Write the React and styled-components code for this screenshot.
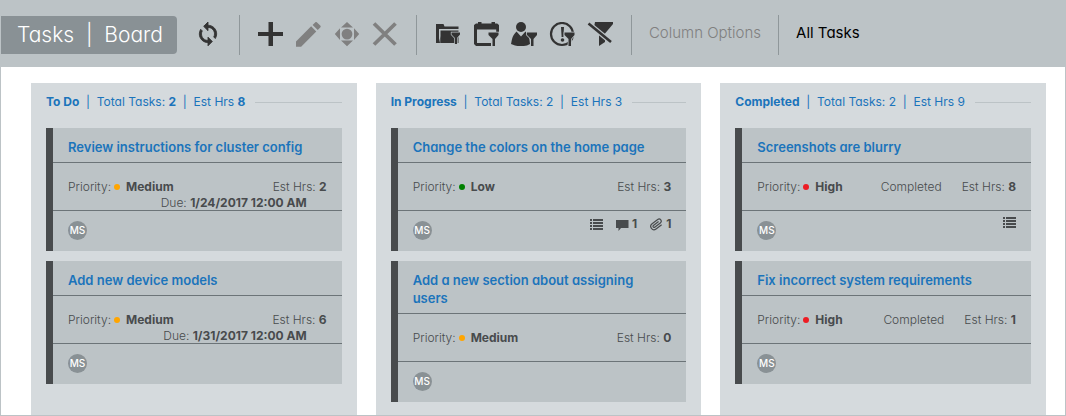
import React from "react";
import styled, { createGlobalStyle } from "styled-components";

const color = {
  bar: "#bcc3c6",
  badge: "#899195",
  rule: "#8f979a",
  column: "#d5dadd",
  cardRule: "#6c7478",
  dark: "#484b4d",
  icon: "#333333",
  muted: "#808080",
  link: "#1b74bb",
};

const GlobalStyle = createGlobalStyle`
  *, *::before, *::after { box-sizing: border-box; }
  body {
    margin: 0;
    background: #fff;
    color: ${color.dark};
    font-family: "Century Gothic", Inter, "Liberation Sans", sans-serif;
    font-feature-settings: "cv11";
    font-size: 12px;
    line-height: 16px;
  }
  button { font: inherit; font-feature-settings: inherit; }
`;

const Page = styled.div`
  display: flex;
  flex-direction: column;
  min-height: 100vh;
  border: 1px solid ${color.bar};
  border-top: 0;
`;

const Toolbar = styled.header`
  display: flex;
  align-items: center;
  padding: 15px 0 12px;
  background: ${color.bar};
`;

const PageTitle = styled.h1`
  margin: 0;
  padding: 0 14px 0 16px;
  border-radius: 0 4px 4px 0;
  background: ${color.badge};
  color: #fff;
  font-size: 21px;
  font-weight: 300;
  line-height: 38px;
  white-space: pre;
`;

const Divider = styled.span`
  width: 1px;
  height: 40px;
  background: ${color.rule};
`;

const Group = styled.div`
  display: flex;
  gap: 12px;
  margin: 0 18px;
`;

const IconButton = styled.button`
  width: 26px;
  height: 26px;
  padding: 0;
  border: 0;
  background: none;
  color: ${(p) => (p.disabled ? color.muted : color.icon)};
  svg { display: block; }
`;

const TextButton = styled.button`
  padding: 0 17px 4px;
  border: 0;
  background: none;
  color: ${(p) => (p.disabled ? color.muted : "#000")};
  font-size: 15px;
  font-weight: ${(p) => (p.disabled ? 300 : 400)};
  line-height: 20px;
  white-space: nowrap;
`;

const Board = styled.main`
  display: grid;
  grid-template-columns: repeat(3, minmax(0, 1fr));
  flex: 1;
  gap: 19px;
  padding: 16px 19px 0 30px;
`;

const Column = styled.section`
  padding: 10px 15px 13px;
  background: ${color.column};
`;

const ColumnHeader = styled.div`
  display: flex;
  align-items: center;
  gap: 10px;
  margin-bottom: 17px;
  color: ${color.link};
  line-height: 18px;
  white-space: pre;
  &::after {
    content: "";
    flex: 1;
    height: 1px;
    background: ${color.bar};
  }
`;

const ColumnName = styled.h2`
  display: inline;
  margin: 0;
  font-size: 12px;
  font-weight: 700;
`;

const Count = styled.span`
  font-weight: ${(p) => (p.$bold ? 700 : 400)};
`;

const CardList = styled.div`
  display: flex;
  flex-direction: column;
  gap: 10px;
`;

const Card = styled.article`
  border-left: 7px solid ${color.dark};
  background: ${color.bar};
`;

const CardTitle = styled.h3`
  margin: 0;
  padding: 10px 15px 6px;
  border-bottom: 1px solid ${color.cardRule};
  font-size: 13px;
  font-weight: 600;
  line-height: 18px;
`;

const TaskLink = styled.a`
  color: ${color.link};
  text-decoration: none;
`;

const Details = styled.div`
  display: flex;
  flex-wrap: wrap;
  align-content: flex-start;
  min-height: 48px;
  padding: 16px 15px 0;
  border-bottom: 1px solid ${color.cardRule};
  font-weight: 300;
  white-space: nowrap;
  b { font-weight: 700; }
`;

const Priority = styled.span`
  display: flex;
  align-items: center;
  margin-right: auto;
`;

const Dot = styled.span`
  width: 6px;
  height: 6px;
  margin: 0 6px 0 3px;
  border-radius: 50%;
  background: ${(p) => p.$color};
`;

const Status = styled.span`
  margin-right: 20px;
`;

const Due = styled.span`
  flex-basis: 100%;
  margin-bottom: -1px;
  padding-right: 20px;
  text-align: right;
`;

const CardFooter = styled.footer`
  display: flex;
  align-items: flex-start;
  justify-content: space-between;
  height: 40px;
  padding: 10px 15px;
`;

const Avatar = styled.span`
  width: 19px;
  height: 19px;
  border-radius: 50%;
  background: ${color.badge};
  color: #fff;
  font-size: 10px;
  font-weight: 500;
  line-height: 19px;
  text-align: center;
`;

const Indicators = styled.div`
  display: flex;
  gap: 13px;
  margin-top: -5px;
`;

const Indicator = styled.span`
  display: flex;
  align-items: center;
  gap: 3px;
  font-weight: 700;
`;

const Icon = ({ size = 26, box = "0 0 26 26", children }) => (
  <svg width={size} height={size} viewBox={box} fill="currentColor" aria-hidden="true">
    {children}
  </svg>
);

const Funnel = ({ x = 15, y = 10, scale = 1 }) => (
  <path
    transform={`translate(${x} ${y}) scale(${scale})`}
    d="M0 .5h10v2.500L6.500 7v7H4V7L0 3z"
    stroke={color.bar}
    strokeWidth="1.600"
    paintOrder="stroke"
  />
);

const SyncIcon = () => (
  <Icon box="0 1 24 24">
    <path d="M12 4V1L8 5l4 4V6c3.31 0 6 2.69 6 6 0 1.01-.25 1.97-.7 2.8l1.46 1.46A7.93 7.93 0 0 0 20 12c0-4.42-3.58-8-8-8zm0 14c-3.31 0-6-2.69-6-6 0-1.01.25-1.97.7-2.8L5.24 7.74A7.93 7.93 0 0 0 4 12c0 4.42 3.58 8 8 8v3l4-4-4-4v3z" stroke="currentColor" strokeWidth=".8" />
  </Icon>
);
const AddIcon = () => (
  <Icon><path d="M10.5 0H15v10h10v4H15v10h-4.500V14H0v-4h10.500z" /></Icon>
);
const EditIcon = () => (
  <Icon box="3 3 19 19">
    <path d="M3 17.250V21h3.750L17.810 9.940l-3.750-3.750zM20.710 7.040a1 1 0 0 0 0-1.410l-2.340-2.340a1 1 0 0 0-1.410 0l-1.830 1.830 3.750 3.750z" />
  </Icon>
);
const MoveIcon = () => (
  <Icon>
    <path d="M13 0l6 5.600H7zM13 24.200l6-5.600H7zM.8 12.100L6 6.300v11.600zM25.200 12.100L20 6.300v11.600z" />
    <circle cx="13" cy="12.100" r="5.400" />
  </Icon>
);
const DeleteIcon = () => (
  <Icon><path d="M2 1.500l21.500 21M23.500 1.500L2 22.500" stroke="currentColor" strokeWidth="3.800" /></Icon>
);
const FolderFilterIcon = () => (
  <Icon>
    <path d="M1 2h7.500l1 2.500H23.500V7H4v14H1z" />
    <path d="M5.500 8.500h18V21h-18z" />
    <path d="M4 21L5.500 14v7z" />
    <Funnel x={16.500} y={10} scale={0.85} />
  </Icon>
);
const CalendarFilterIcon = () => (
  <Icon>
    <path d="M5 0h3.500v1.500h10V0H22v1.500h2.200L26 3v8h-2.800V7.500H4V21h14v3H3l-2-2V3l2-1.500h2z" />
    <Funnel x={15.500} />
  </Icon>
);
const UserFilterIcon = () => (
  <Icon>
    <circle cx="10" cy="5" r="5" />
    <path d="M5.500 9.500L10 14.500l4.500-5L18 14l1 8-3 1.500c-4 .8-9 .8-12 0L0 22c1-3 .2-7 5.500-12.500z" />
    <Funnel x={16} />
  </Icon>
);
const DueFilterIcon = () => (
  <Icon>
    <circle cx="13" cy="12" r="11" fill="none" stroke="currentColor" strokeWidth="2.200" />
    <path d="M12 5h3l-.6 10h-1.800z" />
    <circle cx="13.500" cy="18" r="1.800" />
    <Funnel x={15.500} />
  </Icon>
);
const ClearFilterIcon = () => (
  <Icon>
    <path d="M8 0h18v2l-8 9.500V20l-6 4V11.500L7 5z" />
    <path d="M1.500 1.500L24 20" stroke={color.bar} strokeWidth="5" />
    <path d="M1.500 1.500L24 20" stroke="currentColor" strokeWidth="2.600" />
  </Icon>
);
const ListIcon = () => (
  <Icon size={13} box="0 0 13 13">
    <path d="M0 1h2v2H0zM3 1h10v2H3zM0 4h2v2H0zM3 4h10v2H3zM0 7h2v2H0zM3 7h10v2H3zM0 10h2v2H0zM3 10h10v2H3z" />
  </Icon>
);
const CommentIcon = () => (
  <Icon size={13} box="0 0 13 13"><path d="M0 2h12.500v8H5l-2.500 3v-3H0z" /></Icon>
);
const ClipIcon = () => (
  <Icon size={13} box="0 0 24 24">
    <path
      transform="rotate(8 12 12)"
      d="M21.440 11.050l-9.190 9.190a6 6 0 0 1-8.490-8.490l9.190-9.190a4 4 0 0 1 5.660 5.660l-9.200 9.190a2 2 0 0 1-2.830-2.830l8.490-8.480"
      fill="none"
      stroke="currentColor"
      strokeWidth="2.200"
    />
  </Icon>
);

const viewTools = [{ label: "Refresh", Glyph: SyncIcon }];

const editTools = [
  { label: "Add task", Glyph: AddIcon },
  { label: "Edit task", Glyph: EditIcon, disabled: true },
  { label: "Move task", Glyph: MoveIcon, disabled: true },
  { label: "Delete task", Glyph: DeleteIcon, disabled: true },
];

const filterTools = [
  { label: "Filter by project", Glyph: FolderFilterIcon },
  { label: "Filter by date", Glyph: CalendarFilterIcon },
  { label: "Filter by user", Glyph: UserFilterIcon },
  { label: "Filter by priority", Glyph: DueFilterIcon },
  { label: "Clear filters", Glyph: ClearFilterIcon },
];

const dotColors = { Low: "#008000", Medium: "#ffa500", High: "#ed1c24" };

const columns = [
  {
    name: "To Do",
    hours: 8,
    bold: true,
    tasks: [
      { title: "Review instructions for cluster config", priority: "Medium", hours: 2, due: "1/24/2017 12:00 AM" },
      { title: "Add new device models", priority: "Medium", hours: 6, due: "1/31/2017 12:00 AM" },
    ],
  },
  {
    name: "In Progress",
    hours: 3,
    tasks: [
      { title: "Change the colors on the home page", priority: "Low", hours: 3, list: true, comments: 1, files: 1 },
      { title: "Add a new section about assigning users", priority: "Medium", hours: 0 },
    ],
  },
  {
    name: "Completed",
    hours: 9,
    tasks: [
      { title: "Screenshots are blurry", priority: "High", hours: 8, status: "Completed", list: true },
      { title: "Fix incorrect system requirements", priority: "High", hours: 1, status: "Completed" },
    ],
  },
];

const Tools = ({ items }) => (
  <Group>
    {items.map(({ label, Glyph, disabled }) => (
      <IconButton key={label} type="button" aria-label={label} disabled={disabled}>
        <Glyph />
      </IconButton>
    ))}
  </Group>
);

const TaskCard = ({ task }) => (
  <Card>
    <CardTitle><TaskLink href="#task">{task.title}</TaskLink></CardTitle>
    <Details>
      <Priority>Priority:<Dot $color={dotColors[task.priority]} /><b>{task.priority}</b></Priority>
      {task.status && <Status>{task.status}</Status>}
      <span>Est Hrs: <b>{task.hours}</b></span>
      {task.due && <Due>Due: <b>{task.due}</b></Due>}
    </Details>
    <CardFooter>
      <Avatar>MS</Avatar>
      <Indicators>
        {task.list && <Indicator><ListIcon /></Indicator>}
        {task.comments && <Indicator><CommentIcon />{task.comments}</Indicator>}
        {task.files && <Indicator><ClipIcon />{task.files}</Indicator>}
      </Indicators>
    </CardFooter>
  </Card>
);

export default function App() {
  return (
    <>
      <GlobalStyle />
      <Page>
        <Toolbar>
          <PageTitle>{"Tasks  |  Board"}</PageTitle>
          <Tools items={viewTools} />
          <Divider />
          <Tools items={editTools} />
          <Divider />
          <Tools items={filterTools} />
          <Divider />
          <TextButton type="button" disabled>Column Options</TextButton>
          <Divider />
          <TextButton type="button">All Tasks</TextButton>
        </Toolbar>
        <Board>
          {columns.map((col) => (
            <Column key={col.name}>
              <ColumnHeader>
                <div>
                  <ColumnName>{col.name}</ColumnName>
                  {"  |  Total Tasks: "}
                  <Count $bold={col.bold}>{col.tasks.length}</Count>
                  {"  |  Est Hrs "}
                  <Count $bold={col.bold}>{col.hours}</Count>
                </div>
              </ColumnHeader>
              <CardList>
                {col.tasks.map((task) => <TaskCard key={task.title} task={task} />)}
              </CardList>
            </Column>
          ))}
        </Board>
      </Page>
    </>
  );
}
